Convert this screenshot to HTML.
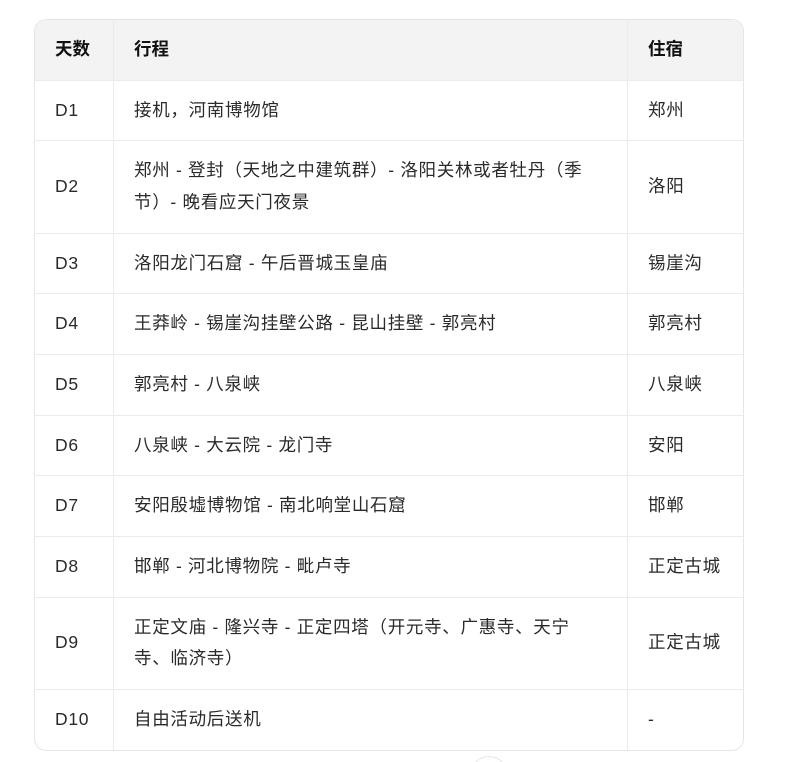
<!DOCTYPE html>
<html><head><meta charset="utf-8"><style>
html,body{margin:0;padding:0;background:#fff;width:789px;height:762px;overflow:hidden;position:relative}
.wrap{position:absolute;left:34px;top:19px;width:708px;border:1px solid #e6e6e6;border-radius:12px;overflow:hidden}
table{border-collapse:collapse;width:100%;font-family:"Liberation Sans","Noto Sans CJK SC",sans-serif;font-size:17.5px;color:#2a2a2a}
td,th{padding:14px 20px;line-height:31.65px;text-align:left;border-bottom:1px solid #ebebeb;border-right:1px solid #ebebeb;vertical-align:middle}
td{letter-spacing:0.7px}
td:last-child,th:last-child{border-right:none}
tr:last-child td{border-bottom:none}
th{background:#f3f3f3;font-weight:bold;color:#111}
.c1{width:38px}.c3{width:75px}
.circ{position:absolute;left:470px;top:756px;width:36px;height:36px;border:1px solid #e6e6e6;border-radius:50%}
</style></head><body>
<div class="wrap"><table>
<tr><th class="c1">天数</th><th>行程</th><th class="c3">住宿</th></tr>
<tr><td>D1</td><td>接机，河南博物馆</td><td>郑州</td></tr>
<tr><td>D2</td><td>郑州 - 登封（天地之中建筑群）- 洛阳关林或者牡丹（季<br>节）- 晚看应天门夜景</td><td>洛阳</td></tr>
<tr><td>D3</td><td>洛阳龙门石窟 - 午后晋城玉皇庙</td><td>锡崖沟</td></tr>
<tr><td>D4</td><td>王莽岭 - 锡崖沟挂壁公路 - 昆山挂壁 - 郭亮村</td><td>郭亮村</td></tr>
<tr><td>D5</td><td>郭亮村 - 八泉峡</td><td>八泉峡</td></tr>
<tr><td>D6</td><td>八泉峡 - 大云院 - 龙门寺</td><td>安阳</td></tr>
<tr><td>D7</td><td>安阳殷墟博物馆 - 南北响堂山石窟</td><td>邯郸</td></tr>
<tr><td>D8</td><td>邯郸 - 河北博物院 - 毗卢寺</td><td>正定古城</td></tr>
<tr><td>D9</td><td>正定文庙 - 隆兴寺 - 正定四塔（开元寺、广惠寺、天宁<br>寺、临济寺）</td><td>正定古城</td></tr>
<tr><td>D10</td><td>自由活动后送机</td><td>-</td></tr>
</table></div>
<div class="circ"></div>
</body></html>
